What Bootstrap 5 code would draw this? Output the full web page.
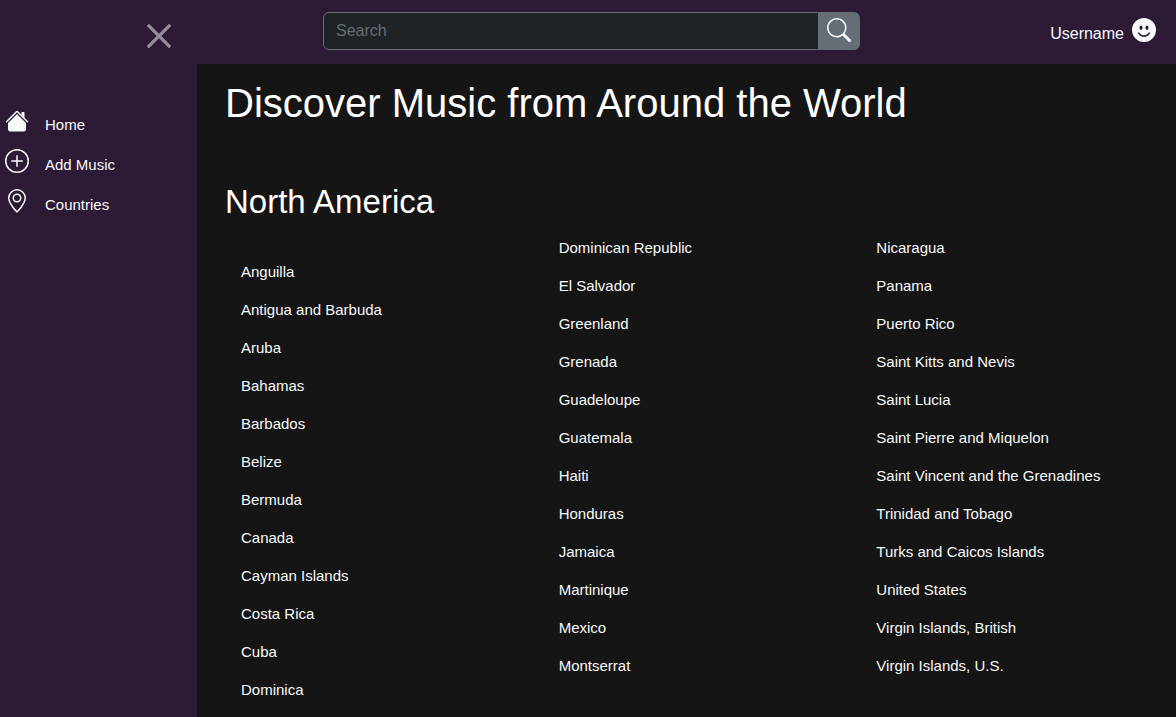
<!DOCTYPE html>
<html lang="en">
<head>
<meta charset="utf-8">
<meta name="viewport" content="width=device-width, initial-scale=1">
<title>Discover Music from Around the World</title>
<link href="https://cdn.jsdelivr.net/npm/bootstrap@5.3.0/dist/css/bootstrap.min.css" rel="stylesheet">
<style>
  body { font-family: "Liberation Sans", Arial, sans-serif; background: #151515; color: #fff; }
  a { color: #f8f9fa; text-decoration: none; }
  a:hover { text-decoration: underline; }
  .icon { width: 24px; height: 24px; fill: #f8f9fa; flex: none; }
  .sidebar { flex: 0 0 197px; background: #2d1b36; }
  .sidebar .btn-close { width: 26px; height: 26px; background-size: 26px; padding: 0; margin: 23px 25px 60px auto; opacity: .5; }
  .side-link { display: flex; height: 40px; gap: 16px; padding: 0 5px; font-size: 15px; line-height: 32px; }
  .topbar { background: #2d1b36; height: 64px; padding-right: 20px; }
  .search { width: 56%; flex: none; margin-left: 126px; height: 38px; }
  .search .form-control, .search .form-control:focus { background: #1f2326; border-color: #656d75; color: #f8f9fa; box-shadow: none; }
  .search .form-control::placeholder { color: #656d75; }
  .search .btn { background: #656d75; border-color: #656d75; padding: 0 8px 2px; display: flex; align-items: center; }
  .user { gap: 8px; line-height: 32px; padding-top: 18px; }
  .content { padding: 14px 14px 16px 28px; }
  .content h1 { font-size: 40px; line-height: 50px; font-weight: 400; margin-bottom: 52px; }
  .content h2 { font-size: 33px; line-height: 44px; font-weight: 400; margin-bottom: 5px; }
  .country-grid { display: grid; grid-template-columns: repeat(3, 1fr); gap: 16px; }
  .country-grid ul { padding-left: 16px; }
  .country-grid li { height: 38px; font-size: 15px; line-height: 38px; }
  .country-grid ul:first-child { padding-top: 24px; }
</style>
</head>
<body>
<div class="d-flex min-vh-100">
  <nav class="sidebar d-flex flex-column" aria-label="Main">
    <button type="button" class="btn-close btn-close-white" aria-label="Close"></button>
    <a class="side-link" href="#">
      <svg class="icon" viewBox="0 0 16 16" aria-hidden="true"><path d="m8 3.293 6 6V13.5a1.5 1.5 0 0 1-1.5 1.5h-9A1.5 1.5 0 0 1 2 13.5V9.293l6-6zm5-.793V6l-2-2V2.5a.5.5 0 0 1 .5-.5h1a.5.5 0 0 1 .5.5z"/><path d="M7.293 1.5a1 1 0 0 1 1.414 0l6.647 6.646a.5.5 0 0 1-.708.708L8 2.207 1.354 8.854a.5.5 0 1 1-.708-.708L7.293 1.5z"/></svg>
      Home</a>
    <a class="side-link" href="#">
      <svg class="icon" viewBox="0 0 16 16" aria-hidden="true"><path d="M8 15A7 7 0 1 1 8 1a7 7 0 0 1 0 14zm0 1A8 8 0 1 0 8 0a8 8 0 0 0 0 16z"/><path d="M8 4a.5.5 0 0 1 .5.5v3h3a.5.5 0 0 1 0 1h-3v3a.5.5 0 0 1-1 0v-3h-3a.5.5 0 0 1 0-1h3v-3A.5.5 0 0 1 8 4z"/></svg>
      Add Music</a>
    <a class="side-link" href="#">
      <svg class="icon" viewBox="0 0 16 16" aria-hidden="true"><path d="M12.166 8.94c-.524 1.062-1.234 2.12-1.96 3.07A31.493 31.493 0 0 1 8 14.58a31.481 31.481 0 0 1-2.206-2.57c-.726-.95-1.436-2.008-1.96-3.07C3.304 7.867 3 6.862 3 6a5 5 0 0 1 10 0c0 .862-.305 1.867-.834 2.94zM8 16s6-5.686 6-10A6 6 0 0 0 2 6c0 4.314 6 10 6 10z"/><path d="M8 8a2 2 0 1 1 0-4 2 2 0 0 1 0 4zm0 1a3 3 0 1 0 0-6 3 3 0 0 0 0 6z"/></svg>
      Countries</a>
  </nav>
  <div class="flex-grow-1">
    <header class="topbar d-flex align-items-start justify-content-between">
      <form class="search input-group mt-2 pt-1" role="search">
        <input type="search" class="form-control" placeholder="Search" aria-label="Search">
        <button class="btn" type="button" aria-label="Submit search">
          <svg class="icon" viewBox="0 0 16 16" aria-hidden="true"><path d="M11.742 10.344a6.5 6.5 0 1 0-1.397 1.398h-.001c.03.04.062.078.098.115l3.85 3.85a1 1 0 0 0 1.415-1.414l-3.85-3.85a1.007 1.007 0 0 0-.115-.1zM12 6.5a5.5 5.5 0 1 1-11 0 5.5 5.5 0 0 1 11 0z"/></svg>
        </button>
      </form>
      <a class="user d-flex" href="#"><span>Username</span>
        <svg class="icon" viewBox="0 0 16 16" aria-hidden="true"><path d="M8 16A8 8 0 1 0 8 0a8 8 0 0 0 0 16zM7 6.5C7 7.328 6.552 8 6 8s-1-.672-1-1.5S5.448 5 6 5s1 .672 1 1.5zM4.285 9.567a.5.5 0 0 1 .683.183A3.498 3.498 0 0 0 8 11.5a3.498 3.498 0 0 0 3.032-1.75.5.5 0 1 1 .866.5A4.498 4.498 0 0 1 8 12.5a4.498 4.498 0 0 1-3.898-2.25.5.5 0 0 1 .183-.683zM10 8c-.552 0-1-.672-1-1.5S9.448 5 10 5s1 .672 1 1.5S10.552 8 10 8z"/></svg>
      </a>
    </header>
    <main class="content">
      <h1>Discover Music from Around the World</h1>
      <h2>North America</h2>
      <div class="country-grid">
        <ul class="list-unstyled mb-0">
          <li><a href="#">Anguilla</a></li>
          <li><a href="#">Antigua and Barbuda</a></li>
          <li><a href="#">Aruba</a></li>
          <li><a href="#">Bahamas</a></li>
          <li><a href="#">Barbados</a></li>
          <li><a href="#">Belize</a></li>
          <li><a href="#">Bermuda</a></li>
          <li><a href="#">Canada</a></li>
          <li><a href="#">Cayman Islands</a></li>
          <li><a href="#">Costa Rica</a></li>
          <li><a href="#">Cuba</a></li>
          <li><a href="#">Dominica</a></li>
        </ul>
        <ul class="list-unstyled mb-0">
          <li><a href="#">Dominican Republic</a></li>
          <li><a href="#">El Salvador</a></li>
          <li><a href="#">Greenland</a></li>
          <li><a href="#">Grenada</a></li>
          <li><a href="#">Guadeloupe</a></li>
          <li><a href="#">Guatemala</a></li>
          <li><a href="#">Haiti</a></li>
          <li><a href="#">Honduras</a></li>
          <li><a href="#">Jamaica</a></li>
          <li><a href="#">Martinique</a></li>
          <li><a href="#">Mexico</a></li>
          <li><a href="#">Montserrat</a></li>
        </ul>
        <ul class="list-unstyled mb-0">
          <li><a href="#">Nicaragua</a></li>
          <li><a href="#">Panama</a></li>
          <li><a href="#">Puerto Rico</a></li>
          <li><a href="#">Saint Kitts and Nevis</a></li>
          <li><a href="#">Saint Lucia</a></li>
          <li><a href="#">Saint Pierre and Miquelon</a></li>
          <li><a href="#">Saint Vincent and the Grenadines</a></li>
          <li><a href="#">Trinidad and Tobago</a></li>
          <li><a href="#">Turks and Caicos Islands</a></li>
          <li><a href="#">United States</a></li>
          <li><a href="#">Virgin Islands, British</a></li>
          <li><a href="#">Virgin Islands, U.S.</a></li>
        </ul>
      </div>
    </main>
  </div>
</div>
<script src="https://cdn.jsdelivr.net/npm/bootstrap@5.3.0/dist/js/bootstrap.bundle.min.js"></script>
</body>
</html>
